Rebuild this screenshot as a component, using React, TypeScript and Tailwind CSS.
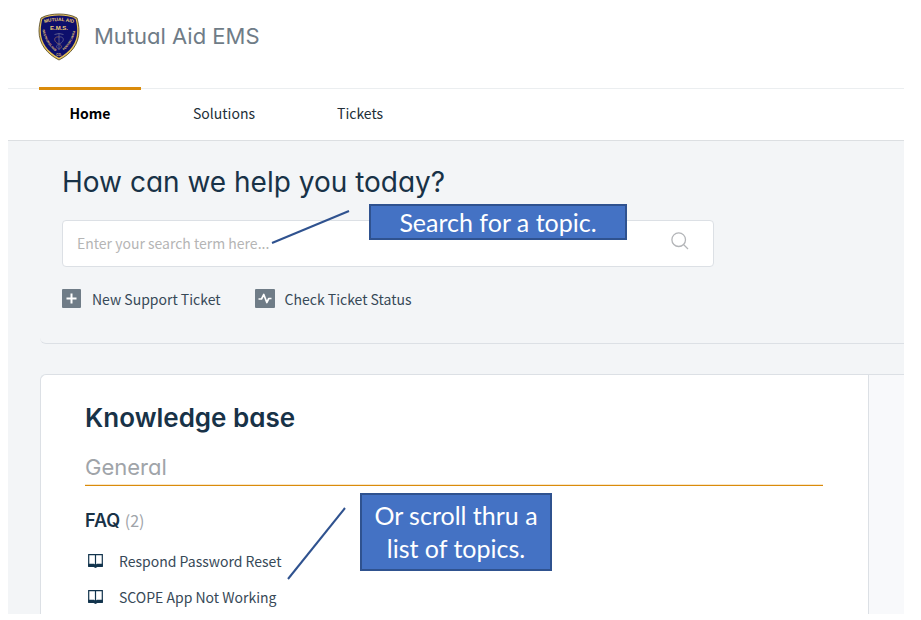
import React from "react";

const heading = "font-['Inter',sans-serif] [font-feature-settings:'cv11']";

const tabs = [
  { label: "Home", active: true },
  { label: "Solutions", active: false },
  { label: "Tickets", active: false },
];

const articles = ["Respond Password Reset", "SCOPE App Not Working"];

const ShieldLogo = () => (
  <svg viewBox="0 0 42 48" className="w-[42px] h-12" role="img" aria-label="Mutual Aid EMS">
    <path
      d="M21 1 C27 1 34 2 39 5 C40 9 41 13 41 18 C41 31 33 41 21 47 C9 41 1 31 1 18 C1 13 2 9 3 5 C8 2 15 1 21 1 Z"
      fill="#e6c25a"
      stroke="#4a3f20"
      strokeWidth="0.8"
    />
    <path
      d="M21 2.6 C27 2.6 33 3.6 37.6 6 C38.6 10 39.2 13 39.2 18 C39.2 30 32 39 21 44.8 C10 39 2.8 30 2.8 18 C2.8 13 3.4 10 4.4 6 C9 3.6 15 2.6 21 2.6 Z"
      fill="#0d0f6c"
    />
    <path id="top" d="M5 10.5 Q21 5.5 37 10.5" fill="none" />
    <path id="left" d="M4.5 15 Q5.5 29 18.5 39.5" fill="none" />
    <path id="right" d="M23.5 39.5 Q36.5 29 37.5 15" fill="none" />
    <g fill="#f0cc74" fontFamily="Liberation Sans, sans-serif" fontWeight="700">
      <text fontSize="4.8" textAnchor="middle">
        <textPath href="#top" startOffset="50%">MUTUAL AID</textPath>
      </text>
      <text x="21" y="16.6" fontSize="6" textAnchor="middle">E.M.S.</text>
      <text fontSize="3" textAnchor="middle">
        <textPath href="#left" startOffset="50%">WESTMORELAND</textPath>
      </text>
      <text fontSize="3" textAnchor="middle">
        <textPath href="#right" startOffset="50%">PENNSYLVANIA</textPath>
      </text>
      <text x="21" y="42.5" fontSize="3" textAnchor="middle">CO.</text>
    </g>
    <g fill="none" stroke="#59588c" strokeWidth="1">
      <path d="M21 20 V37" />
      <path d="M16.5 21.5 Q21 19.5 25.5 21.5" />
      <path d="M21 24 C15.5 23 15 29 21 31 C25 33 23.5 35 21 36" stroke="#7d5a62" />
      <path d="M21 24 C26.5 23 27 29 21 31 C17 33 18.5 35 21 36" />
    </g>
  </svg>
);

const SearchIcon = () => (
  <svg viewBox="0 0 18 18" className="w-[18px] h-[18px]" fill="none" stroke="#b3b5b8" strokeWidth="1.3">
    <circle cx="7.7" cy="7.7" r="6.8" />
    <path d="M12.5 12.5 L17 17" />
  </svg>
);

const PlusIcon = () => (
  <svg viewBox="0 0 20 20" className="w-5 h-5">
    <rect width="19" height="19" rx="1" fill="#6f7c87" />
    <path d="M9.5 4.5 V14.5 M4.5 9.5 H14.5" stroke="#fff" strokeWidth="2" />
  </svg>
);

const PulseIcon = () => (
  <svg viewBox="0 0 20 20" className="w-5 h-5">
    <rect width="20" height="19" rx="1" fill="#6f7c87" />
    <path
      d="M3.5 10 H6.5 L8.8 5.5 L11.8 13.5 L13.8 9.5 H16.5"
      fill="none"
      stroke="#fff"
      strokeWidth="1.7"
      strokeLinejoin="round"
    />
  </svg>
);

const BookIcon = () => (
  <svg viewBox="0 0 15 14" className="w-[15px] h-3.5 shrink-0">
    <path d="M0.7 0.7 H14.3 V12 H0.7 Z M7.5 1 V11" fill="none" stroke="#12344d" strokeWidth="1.2" />
    <path d="M0.2 9.8 H6 L7.5 10.8 L9 9.8 H14.8 V12.9 H9.4 L7.5 14 L5.6 12.9 H0.2 Z" fill="#12344d" />
  </svg>
);

type CalloutProps = {
  className: string;
  children: React.ReactNode;
};

const Callout = ({ className, children }: CalloutProps) => (
  <p
    className={`absolute flex items-center justify-center border-2 border-[#2f528f] bg-[#4472c4] text-center font-['Lato',sans-serif] text-[25px] leading-[33px] text-white ${className}`}
  >
    {children}
  </p>
);

export default function App() {
  return (
    <div className="relative flex min-h-screen flex-col bg-white pl-2 pr-[17px] pb-1.5 font-['Noto_Sans_CJK_SC',sans-serif] text-sm leading-5 text-[#374957]">
      <header className="flex h-[88px] items-start gap-3.5 pl-[30px] pt-[13px]">
        <ShieldLogo />
        <span className={`${heading} text-[22px] leading-[46px] text-[#6f7c87]`}>Mutual Aid EMS</span>
      </header>

      <nav className="flex h-[53px] gap-[22px] border-y border-t-[#ebeef0] border-b-[#dcdfe2] pl-[31px] text-center">
        {tabs.map((tab) => (
          <a
            key={tab.label}
            href="#"
            className={
              tab.active
                ? "-mt-0.5 min-w-[102px] border-t-3 border-[#da8b0b] px-[30px] pt-[13px] font-bold text-black"
                : "px-[30px] pt-3.5 text-[#232f38]"
            }
          >
            {tab.label}
          </a>
        ))}
      </nav>

      <main className="flex flex-1 flex-col bg-[#f3f5f7] pl-8">
        <section className="h-[203px] rounded-bl-md border-b border-[#dce0e5] pl-[22px] pt-5">
          <h1 className={`${heading} text-[28px] leading-[42px] text-[#183247]`}>
            How can we help you today?
          </h1>
          <form className="mt-[17px] flex h-[47px] w-4/5 max-w-[652px] items-center rounded border border-[#dce0e5] bg-white pb-0.5 pl-3.5 pr-6">
            <input
              type="text"
              aria-label="Enter your search term here..."
              placeholder="Enter your search term here..."
              className="min-w-0 flex-1 bg-transparent outline-none placeholder:text-[#b5b5b5]"
            />
            <button type="button" aria-label="Search" className="pb-1">
              <SearchIcon />
            </button>
          </form>
          <div className="mt-[22px] flex gap-[34px]">
            <a href="#" className="flex items-center gap-2.5">
              <PlusIcon />
              New Support Ticket
            </a>
            <a href="#" className="flex items-center gap-2.5">
              <PulseIcon />
              Check Ticket Status
            </a>
          </div>
        </section>

        <div className="mt-[30px] flex flex-1 rounded-tl-md border-l border-t border-[#dce0e5] bg-[#f8f9fb]">
          <section className="flex-1 rounded-tl-md border-r border-[#dce0e5] bg-white pl-11 pr-[45px] pt-[25px]">
            <h2 className={`${heading} text-[26px] font-semibold leading-9 text-[#183247]`}>Knowledge base</h2>
            <div className="mt-4 border-b border-b-[#da8b0b]">
              <h3
                className={`${heading} border-b border-b-[#f8e6c8] pb-0.5 text-[22px] leading-[30px] text-[#a0a4a9]`}
              >
                General
              </h3>
            </div>
            <h4 className={`${heading} mt-[23px] text-lg font-semibold leading-6 text-[#183247]`}>
              FAQ{" "}
              <span className="font-['Noto_Sans_CJK_SC',sans-serif] text-base leading-5 font-normal text-[#a0a4a9]">
                (2)
              </span>
            </h4>
            <ul className="mt-[18px] flex flex-col gap-4">
              {articles.map((title) => (
                <li key={title}>
                  <a href="#" className="flex items-center gap-4 pl-[3px]">
                    <BookIcon />
                    {title}
                  </a>
                </li>
              ))}
            </ul>
          </section>
          <aside className="w-[35px]" />
        </div>
      </main>

      {/* Annotations drawn over the page */}
      <svg
        className="pointer-events-none absolute left-0 top-0 h-[620px] w-[400px]"
        viewBox="0 0 400 620"
        fill="none"
        stroke="#2f528f"
        strokeWidth="2"
      >
        <path d="M272 243 L349 211" />
        <path d="M288 579 L345 508" />
      </svg>
      <Callout className="left-[369px] top-[204px] h-9 w-[258px]">Search for a topic.</Callout>
      <Callout className="left-[360px] top-[493px] h-[78px] w-48 px-2">Or scroll thru a list of topics.</Callout>
    </div>
  );
}
